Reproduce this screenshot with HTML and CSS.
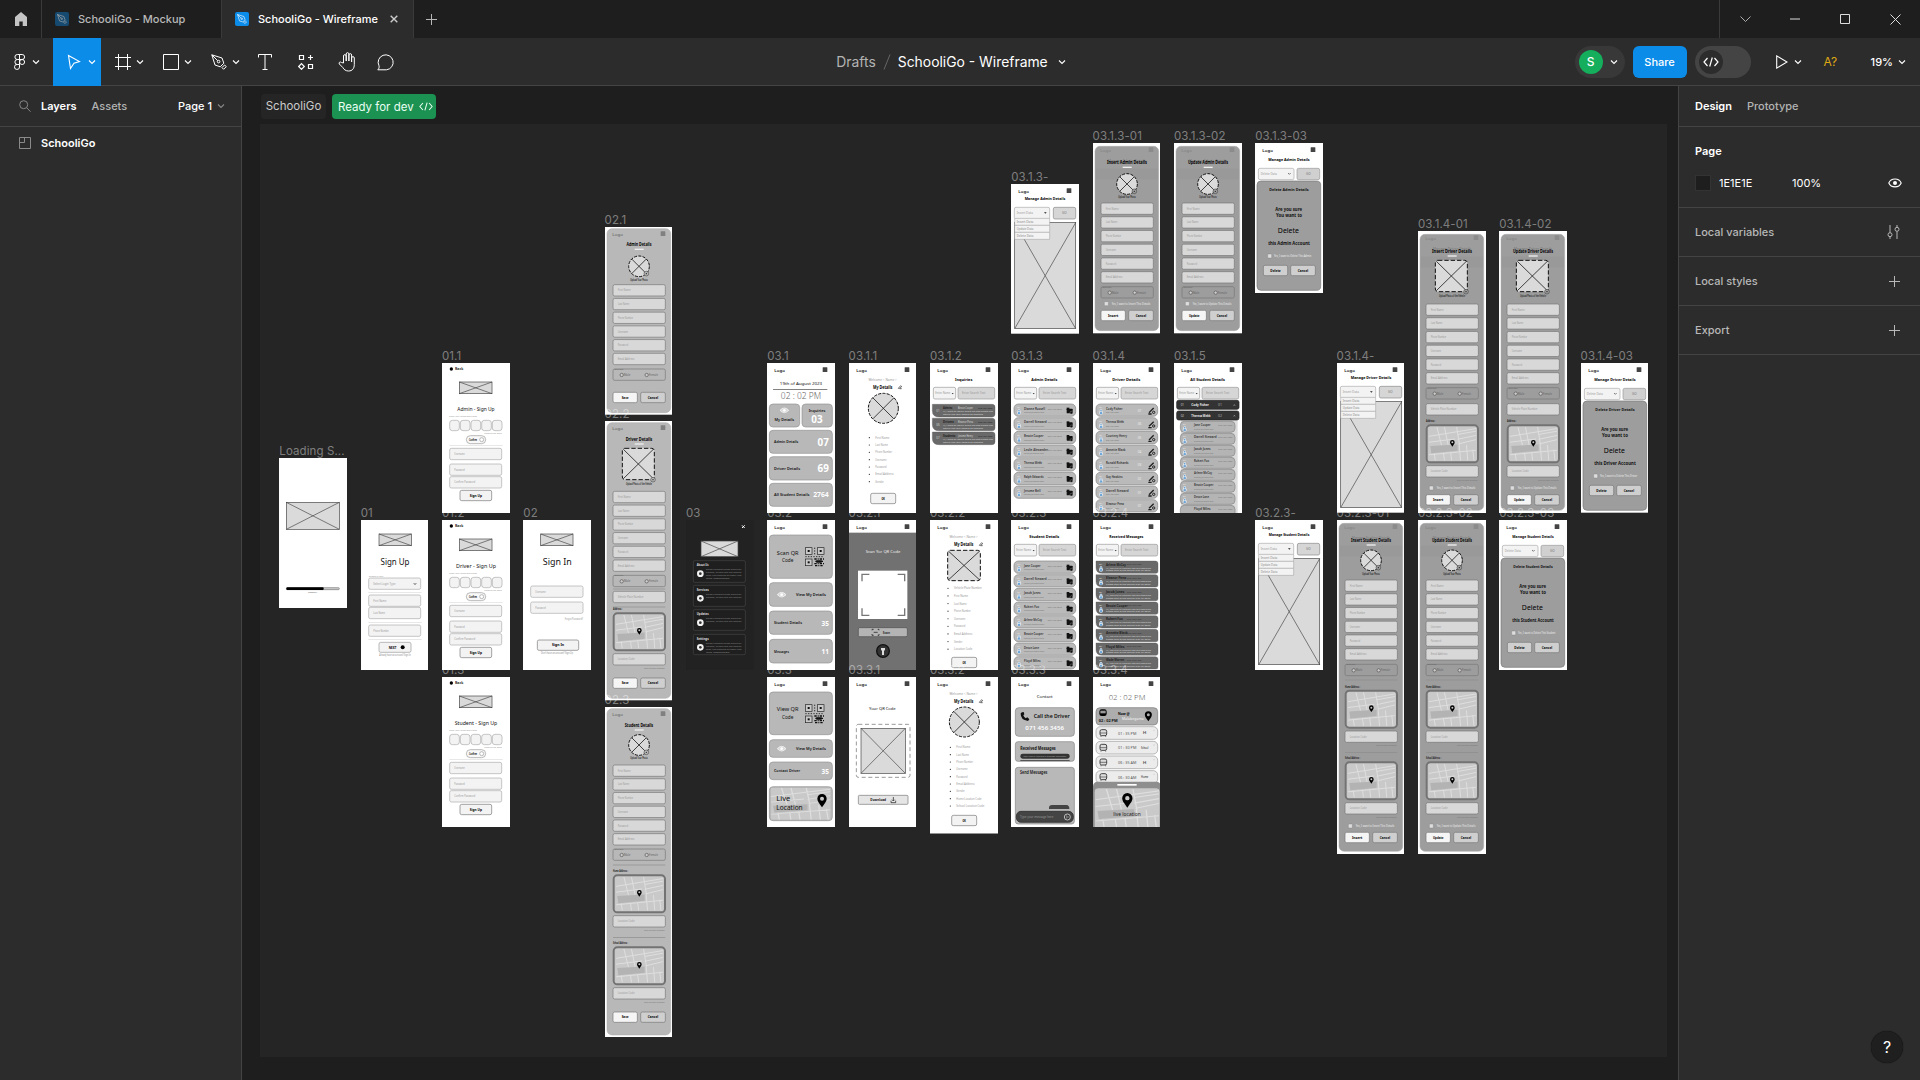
FILE: index.html
```html
<!DOCTYPE html>
<html lang="en">
<head>
<meta charset="utf-8">
<title>SchooliGo - Wireframe</title>
<link rel="stylesheet" href="styles.css">
</head>
<body>
<svg class="sprite" width="0" height="0">
  <symbol id="chev" viewBox="0 0 8 8"><path d="M1 2.5 4 5.5 7 2.5" fill="none" stroke="currentColor" stroke-width="1.1"/></symbol>
  <symbol id="pen" viewBox="0 0 16 16"><path d="M.8.8 11 4l1.8 5.2-3.6 3.6L4 11zM.8.8l6 6M11 13.6 13.6 11l1.7 1.6-2.7 2.7z" fill="none" stroke="currentColor" stroke-linejoin="round"/><circle cx="7.6" cy="7.6" r="1.3" fill="none" stroke="currentColor"/></symbol>
  <symbol id="code" viewBox="0 0 16 12"><path d="M4.5 2 1 6l3.500 4M11.500 2 15 6l-3.500 4M9.300 1.500 6.700 10.500" fill="none" stroke="currentColor" stroke-width="1.200"/></symbol>
  <symbol id="plus" viewBox="0 0 11 11"><path d="M5.5 0v11M0 5.500h11" stroke="currentColor"/></symbol>
</svg>
<div class="app">
  <header class="tabs">
    <div class="home"><svg width="14" height="16" viewBox="0 0 14 16"><path d="M7 1 1 6v9h4.300v-4.500h3.400V15H13V6z" fill="#c4c4c4"/></svg></div>
    <div class="tab"><span class="badge dim"><svg width="10" height="10"><use href="#pen"/></svg></span><span class="tab-name">SchooliGo - Mockup</span></div>
    <div class="tab active"><span class="badge"><svg width="10" height="10"><use href="#pen"/></svg></span><span class="tab-name">SchooliGo - Wireframe</span><svg class="tab-close" width="8" height="8" viewBox="0 0 8 8"><path d="M.7.7l6.600 6.600M7.300.7.7 7.300" stroke="#ccc" stroke-width="1.400"/></svg></div>
    <div class="newtab"><svg width="11" height="11"><use href="#plus"/></svg></div>
    <div class="window">
      <span><svg width="11" height="6" viewBox="0 0 11 6"><path d="M.5.500l5 5 5-5" fill="none" stroke="#aaa"/></svg></span>
      <span><svg width="10" height="2" viewBox="0 0 10 2"><path d="M0 1h10" stroke="#ddd"/></svg></span>
      <span><svg width="10" height="10" viewBox="0 0 10 10"><path d="M.5.500h9v9h-9z" fill="none" stroke="#ddd"/></svg></span>
      <span><svg width="11" height="11" viewBox="0 0 11 11"><path d="M.5.500l10 10M10.500.500l-10 10" stroke="#ddd"/></svg></span>
    </div>
  </header>
  <nav class="toolbar">
    <div class="tools">
      <div class="tool menu"><svg width="12" height="16" viewBox="0 0 12 16"><g fill="none" stroke="currentColor"><path d="M5.500.500H3.400a2.400 2.400 0 0 0 0 5h2.100zM5.500.500h2.600a2.400 2.400 0 0 1 0 5H5.500zM5.500 5.500H3.400a2.400 2.400 0 0 0 0 5h2.100zM5.500 10.500H3.400a2.500 2.500 0 1 0 2.100 2.500z"/><circle cx="8.100" cy="8" r="2.500"/></g></svg><svg class="chev" width="8" height="8"><use href="#chev"/></svg></div>
      <div class="tool selected"><svg width="16" height="16" viewBox="0 0 16 16"><path d="M1.500 1.500 12.500 7.500 7 9.300 3.500 14.500z" fill="none" stroke="currentColor" stroke-width="1.100"/></svg><svg class="chev" width="8" height="8"><use href="#chev"/></svg></div>
      <div class="tool"><svg width="16" height="16" viewBox="0 0 16 16"><path d="M3.500 0v16M12.500 0v16M0 3.500h16M0 12.500h16" stroke="currentColor"/></svg><svg class="chev" width="8" height="8"><use href="#chev"/></svg></div>
      <div class="tool"><svg width="16" height="16" viewBox="0 0 16 16"><path d="M.5.500h15v15H.500z" fill="none" stroke="currentColor"/></svg><svg class="chev" width="8" height="8"><use href="#chev"/></svg></div>
      <div class="tool"><svg width="16" height="16"><use href="#pen"/></svg><svg class="chev" width="8" height="8"><use href="#chev"/></svg></div>
      <div class="tool solo"><svg width="14" height="16" viewBox="0 0 14 16"><path d="M.5 3.500v-3h13v3M7 .500v15M4.500 15.500h5" fill="none" stroke="currentColor"/></svg></div>
      <div class="tool solo wide"><svg width="16" height="16" viewBox="0 0 16 16"><path d="M1.500 1.500h4v4h-4zM10.500 10.500h4v4h-4zM12.500 1v5M10 3.500h5M3.500 9.700l2.800 2.800-2.800 2.800L.700 12.500z" fill="none" stroke="currentColor" stroke-width="1.200"/></svg></div>
      <div class="tool solo"><svg width="18" height="20" viewBox="0 0 18 20"><path d="M5.500 11V4a1.300 1.300 0 0 1 2.700 0v5V2a1.300 1.300 0 0 1 2.700 0v7V3a1.300 1.300 0 0 1 2.700 0v7V6a1.300 1.300 0 0 1 2.700 0v6.500c0 4-2 6.500-5.700 6.500-3 0-4.700-1.500-5.800-3.500L1.300 12c-.900-1.600 1-2.700 2.200-1.500z" fill="none" stroke="currentColor"/></svg></div>
      <div class="tool solo"><svg width="18" height="17" viewBox="0 0 18 17"><path d="M.8 15.800c1.400-1.300 1.500-2.500 1.200-4A7.500 7.500 0 1 1 9.500 15.800z" fill="none" stroke="currentColor"/></svg></div>
    </div>
    <div class="crumb"><span class="drafts">Drafts</span><svg width="8" height="16" viewBox="0 0 8 16"><path d="M7 .500 1 15.500" stroke="#666"/></svg><span class="doc">SchooliGo - Wireframe</span><svg width="8" height="8"><use href="#chev"/></svg></div>
    <div class="actions">
      <div class="people"><span class="avatar">S</span><svg width="8" height="8"><use href="#chev"/></svg></div>
      <div class="share">Share</div>
      <div class="toggle"><span><svg width="16" height="12"><use href="#code"/></svg></span></div>
      <div class="play"><svg width="12" height="14" viewBox="0 0 12 14"><path d="M.700.900v12.200L11 7z" fill="none" stroke="currentColor" stroke-width="1.100"/></svg><svg width="8" height="8"><use href="#chev"/></svg></div>
      <div class="missing">A?</div>
      <div class="zoom">19%<svg width="8" height="8"><use href="#chev"/></svg></div>
    </div>
  </nav>
  <main class="body">
    <aside class="left">
      <div class="row head"><svg width="12" height="12" viewBox="0 0 12 12"><g fill="none" stroke="#888"><circle cx="4.700" cy="4.700" r="4"/><path d="m7.700 7.700 3.800 4"/></g></svg><b>Layers</b><span class="muted">Assets</span><span class="page">Page 1</span><svg class="muted" width="8" height="8"><use href="#chev"/></svg></div>
      <div class="row layer"><svg width="12" height="12" viewBox="0 0 12 12"><path d="M.5.500h11v11H.500zM.500 5.500h5v-5" fill="none" stroke="#8a8a8a"/></svg><b>SchooliGo</b></div>
    </aside>
    <section class="canvas">
      <div class="section-head"><span class="section-name">SchooliGo</span><span class="ready">Ready for dev<svg width="14" height="11"><use href="#code"/></svg></span></div>
      <div class="section" id="section"></div>
      <div class="help">?</div>
    </section>
    <aside class="right">
      <div class="row head"><b>Design</b><span class="muted">Prototype</span></div>
      <div class="fill">
        <b>Page</b>
        <div class="color"><i></i><span class="hex">1E1E1E</span><span>100%</span><svg width="14" height="10" viewBox="0 0 14 10"><path d="M.8 5C3-.400 11-.400 13.200 5 11 10.200 3 10.200.800 5z" fill="none" stroke="#fff" stroke-width="1.100"/><circle cx="7" cy="5" r="2" fill="#fff"/></svg></div>
      </div>
      <div class="row prop">Local variables<svg width="13" height="14" viewBox="0 0 13 14"><g fill="none" stroke="currentColor"><path d="M3 0v7.500M3 12v2M10 0v2M10 6.500V14"/><circle cx="3" cy="9.700" r="2"/><circle cx="10" cy="4.300" r="2"/></g></svg></div>
      <div class="row prop">Local styles<svg width="11" height="11"><use href="#plus"/></svg></div>
      <div class="row prop">Export<svg width="11" height="11"><use href="#plus"/></svg></div>
    </aside>
  </main>
</div>
<script src="boards.js"></script>
</body>
</html>
```
FILE: styles.css
```css
* { box-sizing: border-box; }
body { margin: 0; background: #1e1e1e; color: #fff; font: 500 11px/16px Inter, "Liberation Sans", sans-serif; overflow: hidden; }
svg { display: block; flex: none; }
.sprite { position: absolute; }
.app { width: 1920px; height: 1080px; display: flex; flex-direction: column; }
b { font-weight: 600; }
.muted { color: #b3b3b3; }

.tabs { height: 38px; flex: none; display: flex; background: #1e1e1e; }
.home { width: 42px; border-right: 1px solid #3a3a3a; display: flex; align-items: center; justify-content: center; }
.tab { width: 180px; display: flex; align-items: center; gap: 9px; padding-left: 13px; border-right: 1px solid #3a3a3a; color: #b8b8b8; }
.tab.active { width: 192px; background: #2c2c2c; color: #fff; }
.tab-name { white-space: nowrap; }
.badge { width: 14px; height: 14px; border-radius: 2px; background: #0c8ce9; color: #fff; display: flex; align-items: center; justify-content: center; flex: none; }
.badge.dim { background: #164a70; color: #b0b0b0; }
.tab-close { margin-left: auto; margin-right: 15px; }
.newtab { width: 35px; display: flex; align-items: center; justify-content: center; color: #b8b8b8; }
.window { margin-left: auto; width: 201px; border-left: 1px solid #3a3a3a; display: grid; grid-template-columns: repeat(4, 50px); place-items: center; }

.toolbar { height: 48px; flex: none; display: grid; grid-template-columns: 1fr auto 1fr; align-items: center; background: #2c2c2c; border-bottom: 1px solid #444; }
.tools { display: flex; height: 48px; }
.tool { width: 48px; display: flex; align-items: center; padding-left: 14px; gap: 5px; }
.tool.menu { width: 53px; gap: 6px; padding-left: 14px; }
.tool.solo { width: 39px; padding: 0; justify-content: center; }
.tool.wide { width: 43px; }
.tool.selected { background: #0c8ce9; }
.crumb { display: flex; align-items: center; font-size: 13.9px; font-weight: 400; padding-right: 18px; white-space: nowrap; }
.crumb svg { margin-left: 7px; }
.drafts { color: #b3b3b3; }
.doc { margin: 0 3px 0 7px; }
.actions { display: flex; align-items: center; justify-content: flex-end; padding-right: 14px; }
.people { width: 50px; height: 32px; border-radius: 16px; background: #383838; display: flex; align-items: center; gap: 7px; padding-left: 4px; }
.avatar { width: 24px; height: 24px; border-radius: 50%; background: #14ae5c; text-align: center; line-height: 24px; font-size: 12px; }
.share { width: 54px; height: 32px; margin-left: 8px; border-radius: 6px; background: #0c8ce9; text-align: center; line-height: 32px; }
.toggle { width: 56px; height: 32px; margin-left: 8px; border-radius: 16px; background: #444; padding: 4px; }
.toggle span { width: 24px; height: 24px; border-radius: 50%; background: #2c2c2c; display: flex; align-items: center; justify-content: center; }
.play { display: flex; align-items: center; gap: 6px; margin-left: 25px; }
.missing { margin-left: 22px; width: 14px; color: #dfa914; font-weight: 400; font-size: 12px; }
.zoom { display: flex; align-items: center; gap: 5px; margin-left: 33px; }

.body { flex: 1; min-height: 0; display: flex; }
.left { width: 242px; background: #2c2c2c; border-right: 1px solid #444; }
.row { display: flex; align-items: center; }
.row.head { height: 41px; border-bottom: 1px solid #444; }
.left .head { padding-left: 19px; gap: 10px; }
.left .head .muted { margin-left: 5px; }
.left .head .page { margin-left: auto; }
.left .head svg.muted { margin: 0 16px 0 -5px; color: #888; }
.layer { padding-left: 19px; height: 32px; gap: 10px; }
.right { width: 242px; background: #2c2c2c; border-left: 1px solid #444; }
.right .head { padding-left: 16px; gap: 15px; }
.fill { height: 81px; border-bottom: 1px solid #444; padding: 16px 18px 0 16px; }
.color { display: flex; align-items: center; margin-top: 16px; font-weight: 400; }
.color i { width: 16px; height: 16px; background: #1e1e1e; border: 1px solid #333; }
.color .hex { margin-left: 8px; width: 73px; }
.color svg { margin-left: auto; }
.prop { height: 49px; border-bottom: 1px solid #444; padding: 0 20px 0 16px; justify-content: space-between; color: #b8b8b8; }

.canvas { flex: 1; position: relative; background: #1e1e1e; padding: 8px 11px 0 18px; }
.section-head { display: flex; gap: 6px; padding-left: 1px; height: 30px; font-size: 11.5px; font-weight: 400; white-space: nowrap; }
.section-name { width: 65px; height: 25px; line-height: 25px; text-align: center; border-radius: 4px; background: #252525; color: #ccc; }
.ready { width: 104px; height: 25px; border-radius: 4px; background: #1b9152; display: flex; align-items: center; gap: 5px; padding-left: 6px; color: #e9fff2; }
.section { height: 933px; background: #252525; position: relative; }
.board { position: absolute; }
.board-label { position: absolute; color: rgba(255, 255, 255, .42); font-size: 11.5px; font-weight: 400; line-height: 14px; white-space: nowrap; letter-spacing: .1px; }
.board text { font-family: "Noto Sans", sans-serif; }
.help { position: absolute; right: -225px; bottom: 17px; width: 32px; height: 32px; z-index: 2; border-radius: 50%; background: #1f1f1f; text-align: center; line-height: 32px; font-size: 16px; font-weight: 400; box-shadow: 0 0 1px #000; }
```
FILE: boards.js
```js
// Artboards use a 3x coordinate space: 204 units across for a 68px board.
const R = (x, y, w, h, f, s = 'none', r = 0, sw = 2, extra = '') =>
  `<rect x="${x}" y="${y}" width="${w}" height="${h}" fill="${f}" stroke="${s}" stroke-width="${sw}" rx="${r}" ${extra}/>`;
const C = (x, y, r, f, s = 'none', sw = 2, extra = '') =>
  `<circle cx="${x}" cy="${y}" r="${r}" fill="${f}" stroke="${s}" stroke-width="${sw}" ${extra}/>`;
const P = (d, s, sw = 2, f = 'none', extra = '') => `<path d="${d}" stroke="${s}" stroke-width="${sw}" fill="${f}" ${extra}/>`;
// x is the left edge of the text and w the width it is fitted to.
const T = (x, y, w, size, str, f = '#111', wt = 400) =>
  `<text x="${x}" y="${y}" font-size="${size}" fill="${f}" font-weight="${wt}" textLength="${w}" lengthAdjust="spacingAndGlyphs">${str}</text>`;
const TC = (c, y, w, size, str, f, wt) => T(c - w / 2, y, w, size, str, f, wt);

const cross = (x, y, w, h, sw = 2, c = '#444') => R(x, y, w, h, '#dadada', c, 0, sw) + P(`M${x} ${y}l${w} ${h}M${x + w} ${y}l${-w} ${h}`, c, sw);
const roundPic = (x, y, r) => C(x, y, r, '#dadada', '#111', 3, 'stroke-dasharray="9 4"') +
  P(`M${x - r * .7} ${y - r * .7}l${r * 1.4} ${r * 1.4}M${x + r * .7} ${y - r * .7}l${-r * 1.4} ${r * 1.4}`, '#222', 2.5);
const squarePic = (x, y, w, h) => R(x, y, w, h, '#dadada', '#111', 8, 3, 'stroke-dasharray="13 6"') +
  P(`M${x + 3} ${y + 3}l${w - 6} ${h - 6}M${x + w - 3} ${y + 3}l${6 - w} ${h - 6}`, '#222', 2.5);
const menu = (c = '#444') => R(167, 13, 14, 14, c, 'none', 1);
const head = (c = '#222', m = '#444') => T(22, 26, 32, 11, 'Logo', c, 600) + menu(m);
const field = (y, label, x = 24, w = 157, f = '#d8d8d8', s = '#777', h = 34) =>
  R(x, y, w, h, f, s, 5) + T(x + 14, y + 20, label.length * 3.9, 9, label, '#999');
const button = (x, y, w, label, f = '#cfcfcf') => R(x, y, w, 31, f, '#777', 5) + TC(x + w / 2, y + 19, label.length * 5.2, 11, label, '#000', 700);
const pin = (x, y, k = 1) => `<path transform="translate(${x} ${y}) scale(${k})" fill="#000" fill-rule="evenodd" d="M0 10C-4 4-7 1-7-3a7 7 0 0 1 14 0c0 4-3 7-7 13zM0-6a3 3 0 1 0 0 6 3 3 0 0 0 0-6z"/>`;
const streets = (x, y, w, h) => `<svg x="${x}" y="${y}" width="${w}" height="${h}" viewBox="0 0 144 104" preserveAspectRatio="none">` +
  R(0, 0, 144, 104, '#c9c9c9') + P('M5 59 88 54V73L8 81z', 'none', 0, '#b3b3b3') +
  P('M0 29 144 5M25 0l14 56M48 0l11 55M85 0l9 56M88 38l56-12M91 52l53-13M88 23l56-10M0 47l80-10M0 86l144-14M20 104l-3-22M48 104l-3-24M70 104l-3-26M97 104l-4-48M119 104l-4-48M138 104l-4-34', '#dedede', 3) + '</svg>';
const mapBlock = (y, label = 'Address :') => T(24, y - 7, label.length > 9 ? 45 : 28, 9, label, '#222', 700) + R(26, y + 2, 154, 111, '#c9c9c9', '#737373', 11, 6) +
  streets(32, y + 7, 142, 101) + pin(103, y + 56) + field(y + 123, 'Location Code') + T(117, y + 168, 62, 7, 'Use current location', '#777');
const labels = ['First Name', 'Last Name', 'Phone Number', 'Username', 'Password', 'Email Address'];

function form(o) {
  const dark = o.check;
  const bg = dark ? '#9d9d9d' : '#b8b8b8';
  let s = R(6, dark ? 10 : 5, 191, o.h - (dark ? 18 : 11), bg, '#aaa', 15, 1.5);
  s += dark ? head('#888', '#8b8b8b') + R(9, 77, 186, 32, '#999') : head('#777', '#808080');
  if (dark) s += TC(102, o.ty - 8, 115, 12, 'Manage ' + o.who + ' Details', '#808080', 600);
  s += TC(102, o.ty, dark ? 120 : o.who.length * 5 + 50, 13, o.title, '#000', 700) + R(89, o.ty + 7, 27, 4, '#eee');
  if (o.round) s += roundPic(102, o.py, 31) + C(124, o.py + 22, 7, bg, '#333', 1.5) + C(124, o.py + 22, 2, '#222') + TC(102, o.py + 43, 52, 8, 'Upload Your Photo', '#222', 600);
  else s += squarePic(52, o.py, 96, 94) + C(144, o.py + 94, 7, bg, '#333', 1.5) + C(144, o.py + 94, 2, '#222') + TC(102, o.py + 111, 78, 8, 'Upload Photo of the Vehicle', '#222', 600);
  labels.forEach((l, i) => { s += field(o.fy + i * 41.2, l); });
  s += R(24, o.gy, 157, 34, bg, '#777', 5) + T(28, o.gy + 3, 28, 7, 'Gender', '#666') + C(50, o.gy + 18, 5, '#ccc', '#555') + T(56, o.gy + 21, 20, 8, 'Male', '#666') + C(125, o.gy + 18, 5, '#ccc', '#555') + T(132, o.gy + 21, 27, 8, 'Female', '#666');
  (o.lines || []).forEach(y => { s += R(24, y, 157, 2, '#8c8c8c'); });
  if (o.extra) s += field(o.extra, 'Vehicle Plate Number');
  (o.maps || []).forEach((y, i) => { s += mapBlock(y, o.maps.length > 1 ? (i ? 'School Address :' : 'Home Address :') : 'Address :'); });
  if (dark) s += R(34, o.check - 6, 12, 12, '#ddd', '#777', 2, 1) + T(56, o.check + 3, 116, 8, 'Yes, I want to ' + o.b1 + ' This Details', '#eee');
  return s + button(24, o.by, 73, o.b1, '#f5f5f5') + button(107, o.by, 74, 'Cancel');
}
function selectBar(y, label = 'Enter Name') {
  return R(10, y, 67, 35, '#f3f3f3', '#999', 5) + T(16, y + 21, 45, 9, label, '#999') + P(`M65 ${y + 17}h6l-3 4z`, 'none', 0, '#333') +
    R(84, y, 110, 35, '#d6d6d6', '#999', 5) + T(96, y + 21, 70, 9, 'Enter Search Text', '#999');
}
function manage(who) {
  let s = head() + TC(102, 48, 122, 12, `Manage ${who} Details`, '#000', 700) + R(10, 70, 106, 35, '#f3f3f3', '#aaa', 5) + T(17, 90, 49, 9, 'Insert Data', '#999') +
    P('M99 84h8l-4 6z', 'none', 0, '#555') + R(127, 70, 67, 35, '#d6d6d6', '#888', 5) + TC(160, 90, 14, 9, 'GO', '#777') + cross(11, 116, 183, 318);
  ['Insert Data', 'Update Data', 'Delete Data'].forEach((l, i) => { s += R(11, 103 + i * 21, 105, 21, '#f3f3f3', '#999', 1, 1.5) + T(17, 116 + i * 21, 50, 8, l, '#888'); });
  return s;
}
function del(who) {
  return head() + TC(102, 54, 124, 12, `Manage ${who} Details`, '#000', 700) + R(10, 76, 107, 34, '#f3f3f3', '#aaa', 5) + T(17, 95, 49, 9, 'Delete Data', '#999') + P('M99 90l4 4 4-4', '#444') +
    R(126, 76, 68, 34, '#d0d0d0', '#999', 5) + TC(160, 95, 14, 9, 'GO', '#777') + R(6, 114, 191, 328, '#9d9d9d', '#777', 12) +
    TC(102, 143, 118, 12, `Delete ${who} Details`, '#111', 700) + TC(101, 203, 80, 13, 'Are you sure', '#111', 700) + TC(102, 222, 78, 13, 'You want to', '#111', 700) +
    TC(100, 270, 63, 22, 'Delete', '#000') + TC(102, 306, 125, 13, `this ${who} Account`, '#111', 700) + R(38, 333, 12, 12, '#ddd', '#777', 2, 1) +
    T(57, 342, 112, 8, 'Yes, I want to Delete This ' + who, '#eee') + button(25, 367, 73, 'Delete') + button(107, 367, 74, 'Cancel');
}
const person = (x, y) => T(x, y + 13, 9, 7, '01', '#eee') + C(x + 5, y + 20, 4, '#eee') + C(x + 5, y + 26, 6, '#eee') + C(x + 5, y + 20, 2.5, '#6fa6d8') + R(x + 1, y + 24, 8, 7, '#6fa6d8', 'none', 3);
function list(title, names, kind) {
  let s = head() + TC(100, 53, title.length * 6, 12, title, '#000', 700) + selectBar(73);
  names.forEach((n, i) => {
    const y = 123 + i * 41;
    if (kind === 'msg') {
      s += P(`M9 ${y}h178q8 0 8 8v23q0 6-6 6H28Q9 ${y + 37} 9 ${y + 20}z`, '#555', 1, '#696969') + person(19, y) + T(39, y + 14, n.length * 5, 10, n, '#222', 700) + T(102, y + 13, 43, 7, '070 4567 890', '#333') +
        T(39, y + 23, 135, 7, 'Hi, the bus is running late this morning', '#ddd') + T(39, y + 31, 133, 7, 'please wait at the regular pick up point', '#ddd');
    } else {
      s += R(9, y, 185, 37, '#bababa', '#858585', 13) + person(19, y) + T(39, y + 17, n.length * 4.5, 10, n, '#333', 600) + T(39, y + 28, kind === 'driver' ? 38 : 60, 7, kind === 'driver' ? '070 456 7890' : n.split(' ')[0].toLowerCase() + '@example.com', '#777');
      if (kind === 'driver') s += T(134, y + 23, 11, 9, '0' + (7 - i % 7), '#eee') + P(`M168 ${y + 26}l14-14M166 ${y + 30}h10`, '#222', 4) + C(182, y + 25, 3.5, '#bababa', '#222', 3);
      else s += T(110, y + 17, 42, 7, '070 456 7890', '#777') + R(167, y + 14, 18, 14, '#111', 'none', 2) + R(167, y + 11, 8, 5, '#111') + C(181, y + 26, 4, '#111', '#bababa', 1);
    }
  });
  return s;
}
function allStudents(names) {
  let s = head() + TC(101, 53, 104, 12, 'All Student Details', '#000', 700) + selectBar(73) + R(20, 170, 171, 290, '#dcdcdc');
  [['01', 'Cody Fisher', 112], ['02', 'Theresa Webb', 144]].forEach(([n, l, y]) => { s += R(8, y, 187, 27, '#333', '#222', 6) + T(20, y + 17, 10, 9, n, '#ccc') + T(52, y + 18, l.length * 4.8, 11, l, '#eee', 700) + T(132, y + 17, 12, 9, n, '#aaa') + P(`M179 ${y + 16}l2-3 2 3`, '#ddd', 1.5); });
  names.forEach((n, i) => {
    const y = 175 + i * 36;
    s += R(19, y, 164, 33, '#b4b4b4', '#858585', 12) + T(60, y + 15, n.length * 4.5, 10, n, '#333', 600) + T(133, y + 15, 42, 7, '070 456 7890', '#777');
    if (i < names.length - 1) s += person(27, y - 1) + T(60, y + 25, 58, 7, 'student@example.com', '#777');
  });
  return s;
}
function signUp(who) {
  let s = C(28, 18, 5, '#000') + T(39, 22, 25, 11, 'Back', '#111', 600) + cross(52, 57, 98, 35) + TC(102, 145, 8 * who.length + 72, 15, who + ' - Sign Up') + T(22, 163, 83, 7, 'Enter your registration code', '#999');
  for (let i = 0; i < 5; i++) s += R(23 + i * 32, 172, 29, 31, '#f3f3f3', '#aaa', 8);
  return s + T(127, 212, 52, 7, 'Resend the code', '#999') + R(73, 218, 58, 24, '#f8f8f8', '#999', 12) + T(81, 233, 24, 8, 'Confirm', '#111', 700) + C(119, 230, 6, '#fff', '#999') + R(22, 247, 160, 2, '#ddd') +
    field(256, 'Username', 23, 156, '#f3f3f3', '#aaa') + field(303, 'Password', 23, 156, '#f3f3f3', '#aaa') + field(341, 'Confirm Password', 23, 156, '#f3f3f3', '#aaa') + button(54, 382, 95, 'Sign Up', '#f3f3f3');
}
function details(shape, py, y0, step, items, okY) {
  let s = head() + TC(101, 55, 85, 8, 'Welcome &lt; Name &gt;', '#999') + T(72, 77, 58, 13, 'My Details', '#000', 700) + P('M148 76l7-8 3 3-7 6zM153 77h5', '#222', 2);
  s += shape === 'c' ? roundPic(103, py, 45) : squarePic(53, py, 98, 91);
  items.forEach((l, i) => { s += C(54 + (shape === 'c' ? 7 : 0), y0 + i * step, 1.8, '#222') + T(80 - (shape === 'c' ? 1 : 8), y0 + 3 + i * step, l.length * 4.2, 8, l, '#999'); });
  return s + button(65, okY, 75, 'OK', '#f3f3f3');
}
const card = (y, h, label, num, ny, fs = 32) => R(7, y, 189, h, '#b8b8b8', '#929292', 11) + (label ? T(21, y + h / 2 + 4, label.length * 5.6, 12, label, '#111', 600) : '') + (num ? T(186 - num.length * fs * .54, ny, num.length * fs * .53, fs, num, '#fff', 700) : '');
const eye = (x, y) => P(`M${x - 13} ${y}q13-14 26 0q-13 14-26 0z`, '#fff', 2, '#d9d9d9') + C(x, y, 5, '#fff', '#ccc', 1);
const qr = (x, y) => {
  let s = '';
  [[0, 0], [36, 0], [0, 34]].forEach(([a, b]) => { s += R(x + a, y + b, 20, 20, '#c9c9c9', '#222') + R(x + a + 7, y + b + 7, 6, 6, '#111'); });
  return s + P(`M${x + 28} ${y}v22M${x} ${y + 27}h56`, '#333', 3, 'none', 'stroke-dasharray="4 4"') + P(`M${x + 27} ${y + 34}h29M${x + 30} ${y + 41}h24M${x + 27} ${y + 48}h29M${x + 29} ${y + 54}h26`, '#111', 4, 'none', 'stroke-dasharray="7 3 3 3"') + R(x + 32, y + 38, 18, 7, '#111', 'none', 3);
};
const mini = ['First Name', 'Last Name', 'Phone Number', 'Username', 'Password', 'Email Address', 'Gender'];
const students = ['Jane Cooper', 'Darrell Steward', 'Jacob Jones', 'Robert Fox', 'Arlene McCoy', 'Bessie Cooper', 'Devon Lane', 'Floyd Miles'];

const draw = {
  loading: () => cross(22, 133, 159, 81) + R(22, 389, 159, 6, '#ccc', '#555', 3, 1.5) + R(22, 388, 112, 8, '#000', 'none', 3) + TC(102, 405, 30, 7, 'Loading...', '#555'),
  signUpMain: () => cross(54, 42, 97, 35) + TC(102, 134, 87, 25, 'Sign Up') + T(23, 170, 44, 7, 'Choose a user', '#999') + field(174, 'Select Login Type', 23, 156, '#f3f3f3', '#aaa') + P('M158 189l4 5 4-5', '#333') + R(22, 216, 160, 2, '#ddd') +
    field(225, 'First Name', 23, 156, '#f3f3f3', '#aaa') + field(262, 'Last Name', 23, 156, '#f3f3f3', '#aaa') + R(22, 306, 160, 2, '#ddd') + field(315, 'Phone Number', 23, 156, '#f3f3f3', '#aaa') + R(22, 357, 160, 2, '#ddd') +
    R(54, 367, 96, 30, '#f3f3f3', '#999', 5) + T(83, 386, 23, 10, 'NEXT', '#000', 700) + C(125, 382, 6, '#000') + TC(102, 409, 94, 8, 'Already have an account? Sign In', '#888'),
  signIn: () => cross(53, 42, 97, 35) + TC(103, 134, 87, 25, 'Sign In') + field(198, 'Username', 23, 157, '#f3f3f3', '#aaa') + field(246, 'Password', 23, 157, '#f3f3f3', '#aaa') + T(125, 301, 55, 8, 'Forgot Password?', '#999') +
    button(43, 360, 124, 'Sign In', '#f3f3f3') + TC(102, 402, 96, 8, "Don't have an account? Sign Up", '#888'),
  sideMenu: () => {
    let s = P('M168 16l8 8M176 16l-8 8', '#fff', 3) + cross(45, 63, 111, 47);
    [['About Us', 122, 65], ['Services', 196, 63], ['Updates', 269, 62], ['Settings', 343, 61]].forEach(([l, y, h]) => {
      s += R(22, y, 156, h, '#1f1f1f', '#454545', 4) + T(32, y + 16, 36, 9, l, '#ddd', 700) + C(43, y + 39, 10, '#f2f2f2') + C(43, y + 39, 4, '#333');
      ['School transport made simple for', 'parents, drivers and the admins', 'with live tracking of each ride', 'and messages'].slice(0, h === 65 || y > 340 ? 4 : 2).forEach((t, i) => { s += T(60, y + 29 + i * 9, i === 3 ? 70 : 106, 7, t, '#888'); });
    });
    return s;
  },
  adminHome: () => head() + TC(102, 66, 127, 13, '19th of August 2023') + R(18, 78, 163, 2, '#444') + TC(102, 108, 121, 26, '02 : 02 PM', '#666', 300) +
    R(7, 123, 91, 69, '#b8b8b8', '#929292', 11) + eye(52, 142) + TC(52, 175, 59, 12, 'My Details', '#111', 600) + R(105, 123, 91, 69, '#b8b8b8', '#929292', 11) + TC(150, 146, 50, 12, 'Inquiries', '#111', 600) + TC(150, 179, 34, 31, '03', '#fff', 700) +
    card(202, 69, 'Admin Details', '07', 248) + card(281, 70, 'Driver Details', '69', 327) + card(361, 69, 'All Student Details', '2764', 402, 22),
  inquiries: () => {
    let s = head() + TC(101, 53, 52, 12, 'Inquiries', '#000', 700) + selectBar(73);
    ['Admins', 'Drivers', 'Students'].forEach((l, i) => {
      const y = 124 + i * 41.5;
      s += P(`M7 ${y}h180q8 0 8 8v21q0 9-9 9H28Q7 ${y + 38} 7 ${y + 20}z`, '#555', 1, '#696969') + T(19, y + 22, 10, 9, ['01', '06', '07'][i], '#ccc') + T(39, y + 15, l.length * 4.6, 10, l, '#1d1d1d', 700) + T(84, y + 14, 45, 8, ['Bessie Cooper', 'Eleanor Pena', 'Jerome Henry'][i], '#ddd') + T(145, y + 14, 42, 7, '070 456 7890', '#222') +
        T(39, y + 24, 150, 7, 'Hi, I have an inquiry about the new system and', '#ddd') + T(39, y + 32, 120, 7, 'would like your people to respond', '#ddd');
    });
    return s;
  },
  driverHome: () => head() + card(45, 130) + TC(62, 104, 65, 17, 'Scan QR') + TC(62, 126, 34, 17, 'Code') + qr(115, 83) + card(188, 71) + eye(44, 224) + T(87, 228, 90, 12, 'View My Details', '#111', 600) + card(273, 70, 'Student Details', '35', 317, 21) + card(358, 71, 'Messages', '11', 401, 21),
  studentHome: () => head() + card(45, 128) + TC(62, 103, 65, 17, 'View QR') + TC(62, 126, 34, 17, 'Code') + qr(115, 83) + card(188, 53) + eye(44, 215) + T(87, 219, 90, 12, 'View My Details', '#111', 600) + card(255, 53, 'Contact Driver', '35', 290, 21) + card(329, 102) + streets(12, 332, 179, 96) + T(28, 372, 42, 21, 'Live') + T(28, 400, 79, 20, 'Location') + pin(165, 371, 2),
  scan: () => head() + R(0, 38, 204, 413, '#717171') + TC(102, 100, 104, 13, 'Scan Yor QR Code', '#eee') + R(27, 152, 148, 145, '#fff') + P('M39 184v-21h22M146 163h21v21M39 265v21h22M146 286h21v-21', '#777', 4) +
    R(28, 323, 147, 27, '#b4b4b4', '#505050', 4) + P('M69 331v-3h5M86 328h4v3M69 342v4h5M86 346h4v-4M74 337h12', '#111') + T(101, 341, 22, 11, 'Scan', '#222', 600) + C(102, 393, 19, '#333', '#111', 4) + P('M96 384h12v5l-3 4v12h-6v-12l-3-4z', 'none', 0, '#ddd'),
  qrCode: () => head() + TC(100, 99, 80, 13, 'Your QR Code') + R(22, 142, 161, 159, 'none', '#666', 6, 2, 'stroke-dasharray="12 8"') + cross(36, 154, 133, 135) + R(28, 355, 149, 27, '#e5e5e5', '#777', 3) + T(64, 372, 47, 11, 'Download', '#111', 700) + P('M133 360v11M129 368l4 4 4-4M126 371v6h14v-6', '#111'),
  contact: () => head() + TC(101, 64, 48, 13, 'Contact') + R(13, 92, 177, 86, '#b8b8b8', '#858585', 10) + P('M33 106l-4 3q-1 20 22 23l4-5-6-6-5 3q-6-4-7-9l3-3-2-7z', 'none', 0, '#111') + T(68, 122, 108, 14, 'Call the Driver', '#111', 600) + TC(101, 160, 116, 18, '071 456 3456', '#fff', 600) +
    R(13, 194, 177, 59, '#b8b8b8', '#858585', 8) + T(28, 220, 106, 13, 'Received Messages', '#111', 700) + R(28, 230, 148, 15, '#333', 'none', 7) + T(36, 240, 130, 7, 'Your ride is running 5 minutes late today', '#aaa') + R(28, 249, 148, 3, '#555') +
    R(13, 271, 177, 170, '#b8b8b8', '#858585', 8) + T(27, 290, 82, 13, 'Send Messages', '#111', 600) + P('M114 396v-4q0-8 9-8h43q9 0 9 12z', 'none', 0, '#444') + R(16, 403, 171, 33, '#444', '#222', 14) + T(27, 423, 100, 8, 'Type your message here', '#999') + C(169, 420, 9, '#333', '#fff') + P('M166 416l7 4-7 4z', '#fff', 1),
  track: () => {
    let s = head() + TC(102, 69, 110, 24, '02 : 02 PM', '#666', 300) + R(9, 92, 185, 52, '#adadad', '#777', 12) + R(19, 97, 22, 20, '#000', 'none', 7) + R(22, 101, 16, 8, '#999') + T(17, 136, 57, 11, '02 : 02 PM', '#111', 700) + T(75, 114, 35, 10, 'Now @', '#000', 700) + T(87, 129, 65, 11, 'Malabegama', '#f5f5f5') + pin(166, 118, 1.5);
    [['01 : 35 PM', 149, 'H'], ['01 : 30 PM', 193, 'School'], ['06 : 35 AM', 237, 'H'], ['06 : 30 AM', 281, 'Home']].forEach(([t, y, l]) => { s += R(9, y, 185, 38, '#ececec', '#999', 13) + R(21, y + 9, 20, 18, '#ddd', '#444', 5, 3) + P(`M21 ${y + 19}h20M24 ${y + 27}v4M38 ${y + 27}v4`, '#444') + T(75, y + 24, 55, 12, t, '#555') + TC(155, y + 23, l.length > 1 ? 22 : 11, 10, l, '#555', 600) + C(183, y + 11, 2, '#ccc'); });
    return s + R(0, 314, 204, 160, '#8e8e8e', 'none', 14) + R(73, 321, 58, 5, '#fff') + R(5, 334, 195, 130, '#c9c9c9', 'none', 12) + streets(7, 336, 191, 116) + pin(103, 370, 2.2) + TC(102, 416, 82, 15, 'live location', '#222');
  }
};

const adminNames = ['Dianne Russell', 'Darrell Steward', 'Bessie Cooper', 'Leslie Alexander', 'Theresa Webb', 'Ralph Edwards', 'Jerome Bell'];
const driverNames = ['Cody Fisher', 'Theresa Webb', 'Courtney Henry', 'Annette Black', 'Ronald Richards', 'Guy Hawkins', 'Darrell Steward', 'Eleanor Pena'];
const senders = ['Arlene McCoy', 'Eleanor Pena', 'Jacob Jones', 'Bessie Cooper', 'Robert Fox', 'Annette Black', 'Floyd Miles', 'Wade Warren'];
const adminForm = b => form({ h: 571, who: 'Admin', title: b + ' Admin Details', ty: 64, round: 1, py: 123, fy: 180, gy: 431, check: 482, by: 502, b1: b });
const driverForm = b => form({ h: 846, who: 'Driver', title: b + ' Driver Details', ty: 66, py: 88, fy: 219, gy: 470, extra: 518, maps: [581], check: 771, by: 791, b1: b });
const studentForm = b => form({ h: 1002, who: 'Student', title: b + ' Student Details', ty: 66, round: 1, py: 121, fy: 180, gy: 433, lines: [479, 696], maps: [510, 725], check: 918, by: 937, b1: b });

// name, column, top, height, content
const boards = [
  ['Loading S...', 0, 458, 150, draw.loading()],
  ['01', 1, 520.3, 150, draw.signUpMain()],
  ['01.1', 2, 363, 150, signUp('Admin')],
  ['01.2', 2, 520.3, 150, signUp('Driver')],
  ['01.3', 2, 677.3, 150, signUp('Student')],
  ['02', 3, 520.3, 150, draw.signIn()],
  ['02.1', 4, 227, 187.7, form({ h: 563, who: 'Admin', title: 'Admin Details', ty: 58, round: 1, py: 118, fy: 173, gy: 426, by: 496, b1: 'Save' })],
  ['02.2', 4, 421.3, 279.3, form({ h: 838, who: 'Driver', title: 'Driver Details', ty: 60, py: 82, fy: 211, gy: 463, lines: [503, 557], extra: 511, maps: [575], by: 771, b1: 'Save' })],
  ['02.3', 4, 707.3, 330, form({ h: 990, who: 'Student', title: 'Student Details', ty: 60, round: 1, py: 114, fy: 174, gy: 426, lines: [473, 690], maps: [503, 719], by: 915, b1: 'Save' })],
  ['03', 5, 520.3, 150, draw.sideMenu(), '#222'],
  ['03.1', 6, 363, 150, draw.adminHome()],
  ['03.2', 6, 520.3, 150, draw.driverHome()],
  ['03.3', 6, 677, 150, draw.studentHome()],
  ['03.1.1', 7, 363, 150, details('c', 136, 224, 22, mini, 391)],
  ['03.2.1', 7, 520.3, 150, draw.scan()],
  ['03.3.1', 7, 677.3, 150, draw.qrCode()],
  ['03.1.2', 8, 363, 150, draw.inquiries()],
  ['03.2.2', 8, 520.3, 150, details('s', 91, 205, 22.8, ['Vehicle Plate Number', ...mini, 'Location Code'], 412)],
  ['03.3.2', 8, 677.3, 156.5, details('c', 135, 211, 22, [...mini, 'Home Location Code', 'School Location Code'], 415)],
  ['03.1.3', 9, 363, 150, list('Admin Details', adminNames, 'user')],
  ['03.2.3', 9, 520.3, 150, list('Student Details', students, 'user')],
  ['03.3.3', 9, 677.3, 150, draw.contact()],
  ['03.1.4', 10, 363, 150, list('Driver Details', driverNames, 'driver')],
  ['03.2.4', 10, 520.3, 150, list('Received Messages', senders, 'msg')],
  ['03.3.4', 10, 677.3, 150, draw.track()],
  ['03.1.5', 11, 363, 150, allStudents(students)],
  ['03.1.3-', 9, 184, 149.7, manage('Admin')],
  ['03.1.3-01', 10, 143.3, 190.3, adminForm('Insert')],
  ['03.1.3-02', 11, 143.3, 190.3, adminForm('Update')],
  ['03.1.3-03', 12, 143.3, 150, del('Admin')],
  ['03.1.4-', 13, 363.3, 149.7, manage('Driver')],
  ['03.1.4-01', 14, 231, 282, driverForm('Insert')],
  ['03.1.4-02', 15, 231, 282, driverForm('Update')],
  ['03.1.4-03', 16, 363.3, 149.7, del('Driver')],
  ['03.2.3-', 12, 520.3, 150, manage('Student')],
  ['03.2.3-01', 13, 520.3, 334, studentForm('Insert')],
  ['03.2.3-02', 14, 520.3, 334, studentForm('Update')],
  ['03.2.3-03', 15, 520.3, 150, del('Student')]
];

const ORIGIN = { x: 260, y: 124 };
const colX = c => 279.3 + c * 81.33 - ORIGIN.x;
document.getElementById('section').innerHTML =
  boards.map(([, c, y, h, art, bg]) => `<svg class="board" style="left:${colX(c)}px;top:${y - ORIGIN.y}px" width="67.7" height="${h}" viewBox="0 0 203 ${h * 3}">${R(0, 0, 204, h * 3, bg || '#fff')}${art}</svg>`).join('') +
  boards.map(([n, c, y]) => `<span class="board-label" style="left:${colX(c)}px;top:${y - ORIGIN.y - 14.5}px">${n}</span>`).join('');
```
